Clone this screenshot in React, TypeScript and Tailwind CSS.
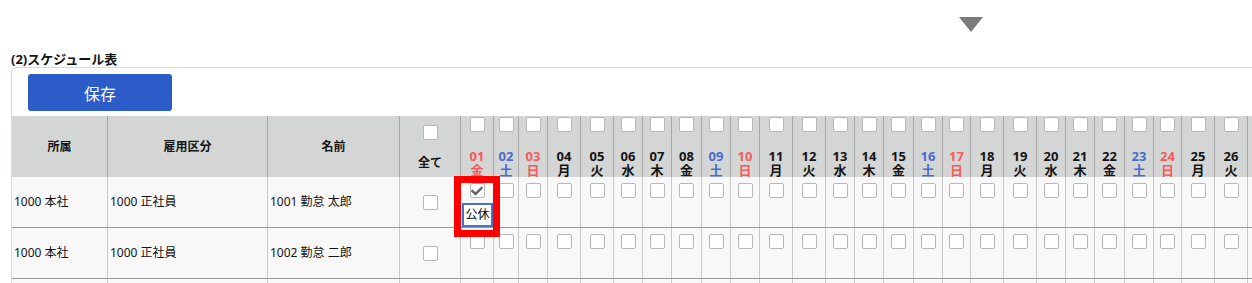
import React from 'react';

const R = 'text-[#f55b5b]';
const B = 'text-[#4a6ccf]';
const K = 'text-[#141414]';

const days = [
  { d: '01', w: '金', c: R, cw: 'w-[33px]' },
  { d: '02', w: '土', c: B, cw: 'w-[25px]' },
  { d: '03', w: '日', c: R, cw: 'w-[29px]' },
  { d: '04', w: '月', c: K, cw: 'w-[33px]' },
  { d: '05', w: '火', c: K, cw: 'w-[33px]' },
  { d: '06', w: '水', c: K, cw: 'w-[29px]' },
  { d: '07', w: '木', c: K, cw: 'w-[29px]' },
  { d: '08', w: '金', c: K, cw: 'w-[30px]' },
  { d: '09', w: '土', c: B, cw: 'w-[29px]' },
  { d: '10', w: '日', c: R, cw: 'w-[29px]' },
  { d: '11', w: '月', c: K, cw: 'w-[33px]' },
  { d: '12', w: '火', c: K, cw: 'w-[33px]' },
  { d: '13', w: '水', c: K, cw: 'w-[29px]' },
  { d: '14', w: '木', c: K, cw: 'w-[29px]' },
  { d: '15', w: '金', c: K, cw: 'w-[30px]' },
  { d: '16', w: '土', c: B, cw: 'w-[29px]' },
  { d: '17', w: '日', c: R, cw: 'w-[28px]' },
  { d: '18', w: '月', c: K, cw: 'w-[33px]' },
  { d: '19', w: '火', c: K, cw: 'w-[33px]' },
  { d: '20', w: '水', c: K, cw: 'w-[29px]' },
  { d: '21', w: '木', c: K, cw: 'w-[29px]' },
  { d: '22', w: '金', c: K, cw: 'w-[30px]' },
  { d: '23', w: '土', c: B, cw: 'w-[29px]' },
  { d: '24', w: '日', c: R, cw: 'w-[28px]' },
  { d: '25', w: '月', c: K, cw: 'w-[33px]' },
  { d: '26', w: '火', c: K, cw: 'w-[33px]' },
  { d: '27', w: '水', c: K, cw: 'w-[29px]' },
  { d: '28', w: '木', c: K, cw: 'w-[29px]' },
  { d: '29', w: '金', c: K, cw: 'w-[30px]' },
  { d: '30', w: '土', c: B, cw: 'w-[29px]' },
  { d: '31', w: '日', c: R, cw: 'w-[29px]' },
];

const people = [
  { dept: '1000 本社', kind: '1000 正社員', name: '1001 勤怠 太郎' },
  { dept: '1000 本社', kind: '1000 正社員', name: '1002 勤怠 二郎' },
  { dept: '', kind: '', name: '' },
];

function Box({ checked }: { checked?: boolean }) {
  return (
    <div className="w-[15px] h-[15px] shrink-0 rounded-[2px] border border-[#b7b7b7] bg-white flex items-center justify-center">
      {checked && (
        <svg width="12" height="12" viewBox="0 0 512 512" fill="#666666">
          <path d="M173.898 439.404l-166.4-166.4c-9.997-9.997-9.997-26.206 0-36.204l36.203-36.204c9.997-9.998 26.207-9.998 36.204 0L192 312.69 432.095 72.596c9.997-9.997 26.207-9.997 36.204 0l36.203 36.204c9.997 9.997 9.997 26.206 0 36.204l-294.4 294.401c-9.998 9.997-26.207 9.997-36.204-.001z" />
        </svg>
      )}
    </div>
  );
}

export default function App() {
  return (
    <div className="w-[1252px] h-[283px] overflow-hidden bg-white font-['Noto_Sans','Noto_Sans_CJK_JP',sans-serif] text-[#141414]">
      <div className="pt-[17px] pl-[959px]">
        <svg width="24" height="15" viewBox="0 0 24 15" className="block">
          <polygon points="0,0 24,0 12,15" fill="#7a7a7a" />
        </svg>
      </div>
      <div className="mt-[19px] pl-[11px] text-[13px] font-bold leading-[16px]">(2)スケジュール表</div>
      <div className="ml-[11px] w-[1320px] border border-[#d9d9d9] rounded-[5px] pt-[6px]">
        <button className="ml-[16px] w-[144px] h-[37px] rounded-[3px] bg-[#2b5cc8] text-white text-[16px] leading-[20px] pt-[2px] block">
          保存
        </button>
        <div className="mt-[5px]">
          {/* header */}
          <div className="flex h-[61px] bg-[#d4d6d6] text-[12px] font-bold">
            <div className="w-[96px] shrink-0 border-r border-[#a8a8a8] flex items-center justify-center">所属</div>
            <div className="w-[160px] shrink-0 border-r border-[#a8a8a8] flex items-center justify-center">雇用区分</div>
            <div className="w-[132px] shrink-0 border-r border-[#a8a8a8] flex items-center justify-center">名前</div>
            <div className="w-[61px] shrink-0 border-r border-[#a8a8a8] flex flex-col items-center pt-[9px]">
              <Box />
              <div className="mt-[16px] leading-[14px]">全て</div>
            </div>
            {days.map((d) => (
              <div
                key={d.d}
                className={`${d.cw} shrink-0 border-r border-[#a8a8a8] flex flex-col items-center justify-between pt-[1px]`}
              >
                <Box />
                <div className={`${d.c} text-[13px] leading-[14px] text-center`}>
                  <div>{d.d}</div>
                  <div>{d.w}</div>
                </div>
              </div>
            ))}
          </div>
          {/* body */}
          {people.map((p, ri) => (
            <div key={ri} className="flex h-[51px] bg-[#f8f8f8] border-b border-[#999999] text-[12px]">
              <div className="w-[96px] shrink-0 border-r border-[#c8c8c8] flex items-center pl-[2px]">{p.dept}</div>
              <div className="w-[160px] shrink-0 border-r border-[#c8c8c8] flex items-center pl-[2px]">{p.kind}</div>
              <div className="w-[132px] shrink-0 border-r border-[#c8c8c8] flex items-center pl-[2px]">{p.name}</div>
              <div className="w-[61px] shrink-0 border-r border-[#c8c8c8] flex items-center justify-center">
                {ri < 2 && <Box />}
              </div>
              {days.map((d, di) => (
                <div
                  key={d.d}
                  className={`${d.cw} shrink-0 border-r border-[#c8c8c8] flex flex-col items-center pt-[6px] relative`}
                >
                  {ri < 2 && <Box checked={ri === 0 && di === 0} />}
                  {ri === 0 && di === 0 && (
                    <>
                      <div className="mt-[5px] self-start ml-[1px] w-[31px] h-[24px] border-2 border-[#4a72c4] bg-white flex items-center justify-center text-[12px] leading-none text-black">
                        公休
                      </div>
                      <div className="absolute left-[-7px] top-[-1px] w-[46px] h-[61px] border-[7px] border-[#ff0000] z-10" />
                    </>
                  )}
                </div>
              ))}
            </div>
          ))}
        </div>
      </div>
    </div>
  );
}
